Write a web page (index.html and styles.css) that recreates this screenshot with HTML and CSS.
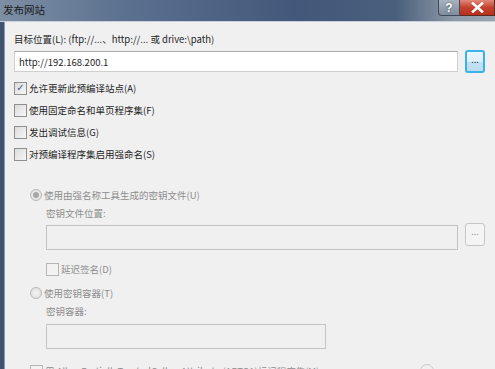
FILE: index.html
```html
<!DOCTYPE html>
<html lang="zh-CN">

<head>
  <meta charset="UTF-8">
  <meta name="viewport" content="width=device-width, initial-scale=1.0">
  <title>发布网站</title>
  <link rel="stylesheet" href="styles.css">
</head>

<body>
  <!-- Dialog window -->
  <div class="window">
    <div class="titlebar">
      <span class="title">发布网站</span>
      <div class="caption-buttons">
        <span class="cap-btn help">?</span>
        <span class="cap-btn close">
          <svg width="13" height="11" viewBox="0 0 13 11">
            <path d="M2 1.5 L11 9.5 M11 1.5 L2 9.5" stroke="#fff" stroke-width="2.6" stroke-linecap="square" />
          </svg>
        </span>
      </div>
    </div>

    <div class="frame">
      <div class="content">
        <div class="label">目标位置(L): (ftp://...、http://... 或 drive:\path)</div>
        <div class="path-row">
          <div class="textbox">http://192.168.200.1</div>
          <div class="browse focused">...</div>
        </div>

        <div class="options">
          <div class="check-row"><span class="box checked">&#10003;</span>允许更新此预编译站点(A)</div>
          <div class="check-row"><span class="box"></span>使用固定命名和单页程序集(F)</div>
          <div class="check-row"><span class="box"></span>发出调试信息(G)</div>
          <div class="check-row"><span class="box"></span>对预编译程序集启用强命名(S)</div>
        </div>

        <!-- Strong name settings (disabled) -->
        <div class="strong-name">
          <div class="radio-row"><span class="radio selected"></span>使用由强名称工具生成的密钥文件(U)</div>
          <div class="sub">
            <div class="sub-label">密钥文件位置:</div>
            <div class="path-row">
              <div class="textbox disabled"></div>
              <div class="browse disabled">...</div>
            </div>
            <div class="check-row dim"><span class="box"></span>延迟签名(D)</div>
          </div>

          <div class="radio-row"><span class="radio"></span>使用密钥容器(T)</div>
          <div class="sub">
            <div class="sub-label">密钥容器:</div>
            <div class="textbox disabled short"></div>
          </div>

          <div class="check-row dim aptca"><span class="box"></span>用 AllowPartiallyTrustedCallersAttribute (APTCA)标记程序集(M)<span class="info"></span></div>
        </div>
      </div>
    </div>
  </div>
</body>

</html>
```

FILE: styles.css
```css
/* Reset */
body,
html {
  margin: 0;
  padding: 0;
  font-family: "Noto Sans CJK SC", "Noto Sans", sans-serif;
  font-size: 9.5px;
}

body {
  width: 495px;
  height: 369px;
  overflow: hidden;
  background-color: #f0f0f0;
}

.window {
  display: flex;
  flex-direction: column;
  height: 100%;
}

/* Title bar */
.titlebar {
  height: 21px;
  flex-shrink: 0;
  display: flex;
  justify-content: space-between;
  background: linear-gradient(90deg, #7d8ea4 0%, #5c7190 25%, #42587a 60%, #4a5f7c 80%, #8f9aa8 92%, #9aa4b0 100%);
  border-bottom: 1px solid #c9d1dc;
}

.title {
  color: #1a1a1a;
  font-size: 10.5px;
  padding: 2px 0 0 3px;
  line-height: 15px;
}

.caption-buttons {
  display: flex;
  height: 16px;
}

.cap-btn {
  display: flex;
  align-items: center;
  justify-content: center;
  border: 1px solid #3b4a5c;
  border-top: none;
  box-sizing: border-box;
  height: 16px;
}

.help {
  width: 22px;
  color: #fff;
  font-family: "Liberation Sans", sans-serif;
  font-weight: bold;
  font-size: 12px;
  background: linear-gradient(#a9b3bf, #7f8c9b);
  border-radius: 0 0 0 4px;
  text-shadow: 0 0 2px #34404e;
}

.close {
  width: 35px;
  background: linear-gradient(#e2887a, #c3422d 50%, #b8301c);
  border-left: none;
  border-color: #5d2a22;
}

/* Frame around the client area */
.frame {
  flex: 1;
  display: flex;
  background-color: #3e5170;
  padding-left: 4px;
}

.content {
  flex: 1;
  background-color: #f0f0f0;
  border-left: 1px solid #8a9bb2;
  padding: 10px 0 0 9px;
  color: #1e1e1e;
}

.label {
  line-height: 14px;
}

.path-row {
  display: flex;
  align-items: flex-start;
  gap: 7px;
  margin-top: 5px;
}

.textbox {
  width: 444px;
  height: 21px;
  box-sizing: border-box;
  border: 1px solid #cfcfcf;
  border-top-color: #acacac;
  background-color: #fff;
  padding: 2px 0 0 4px;
  line-height: 16px;
}

.textbox.disabled {
  background-color: #f0f0f0;
  border-color: #c4c4c4;
  height: 25px;
  width: 412px;
}

.textbox.short {
  width: 280px;
  margin-top: 5px;
}

.browse {
  width: 20px;
  height: 23px;
  box-sizing: border-box;
  border-radius: 3px;
  text-align: center;
  font-size: 9px;
  line-height: 16px;
  color: #333;
  margin-top: -1px;
}

.browse.focused {
  border: 2px solid #3cb1e6;
  background: linear-gradient(#eaf6fd 0%, #dceefa 50%, #c3e1f4 51%, #bcdcef 100%);
}

.browse.disabled {
  border: 1px solid #c6c6c6;
  background-color: #f4f4f4;
  color: #9a9a9a;
  margin-top: -2px;
}

/* Check boxes and radio buttons */
.options {
  margin-top: 7px;
  display: flex;
  flex-direction: column;
  gap: 6px;
}

.check-row,
.radio-row {
  display: flex;
  align-items: center;
  height: 16px;
  line-height: 16px;
}

.box {
  width: 11px;
  height: 11px;
  border: 1px solid #8e8f8f;
  background: linear-gradient(135deg, #dcdcdc, #f6f6f6);
  margin-right: 2px;
  display: inline-flex;
  align-items: center;
  justify-content: center;
  font-size: 10px;
  color: #3a5a98;
  font-family: "DejaVu Sans", sans-serif;
}

.strong-name {
  margin-top: 25px;
  padding-left: 16px;
  color: #8d8d8d;
  display: flex;
  flex-direction: column;
}

.radio {
  width: 10px;
  height: 10px;
  border-radius: 50%;
  border: 1px solid #b8b8b8;
  background: radial-gradient(#f4f4f4, #dcdcdc);
  margin-right: 2px;
  box-sizing: content-box;
  position: relative;
}

.radio.selected::after {
  content: "";
  position: absolute;
  left: 2px;
  top: 2px;
  width: 6px;
  height: 6px;
  border-radius: 50%;
  background: #a6a6a6;
}

.sub {
  padding-left: 16px;
  display: flex;
  flex-direction: column;
}

.sub-label {
  margin-top: 2px;
  line-height: 16px;
}

.sub .path-row {
  margin-top: 4px;
}

.sub .textbox {
  margin-bottom: 11px;
}

.sub .textbox.short {
  margin-bottom: 10px;
}

.check-row.dim .box {
  border-color: #b5b5b5;
  background: #f2f2f2;
}

.check-row.dim {
  margin-bottom: 8px;
}

.aptca {
  margin-top: 4px;
  color: #8d8d8d;
}

.info {
  width: 12px;
  height: 12px;
  border-radius: 50%;
  border: 1px solid #c8c8c8;
  margin-left: 101px;
}
```
